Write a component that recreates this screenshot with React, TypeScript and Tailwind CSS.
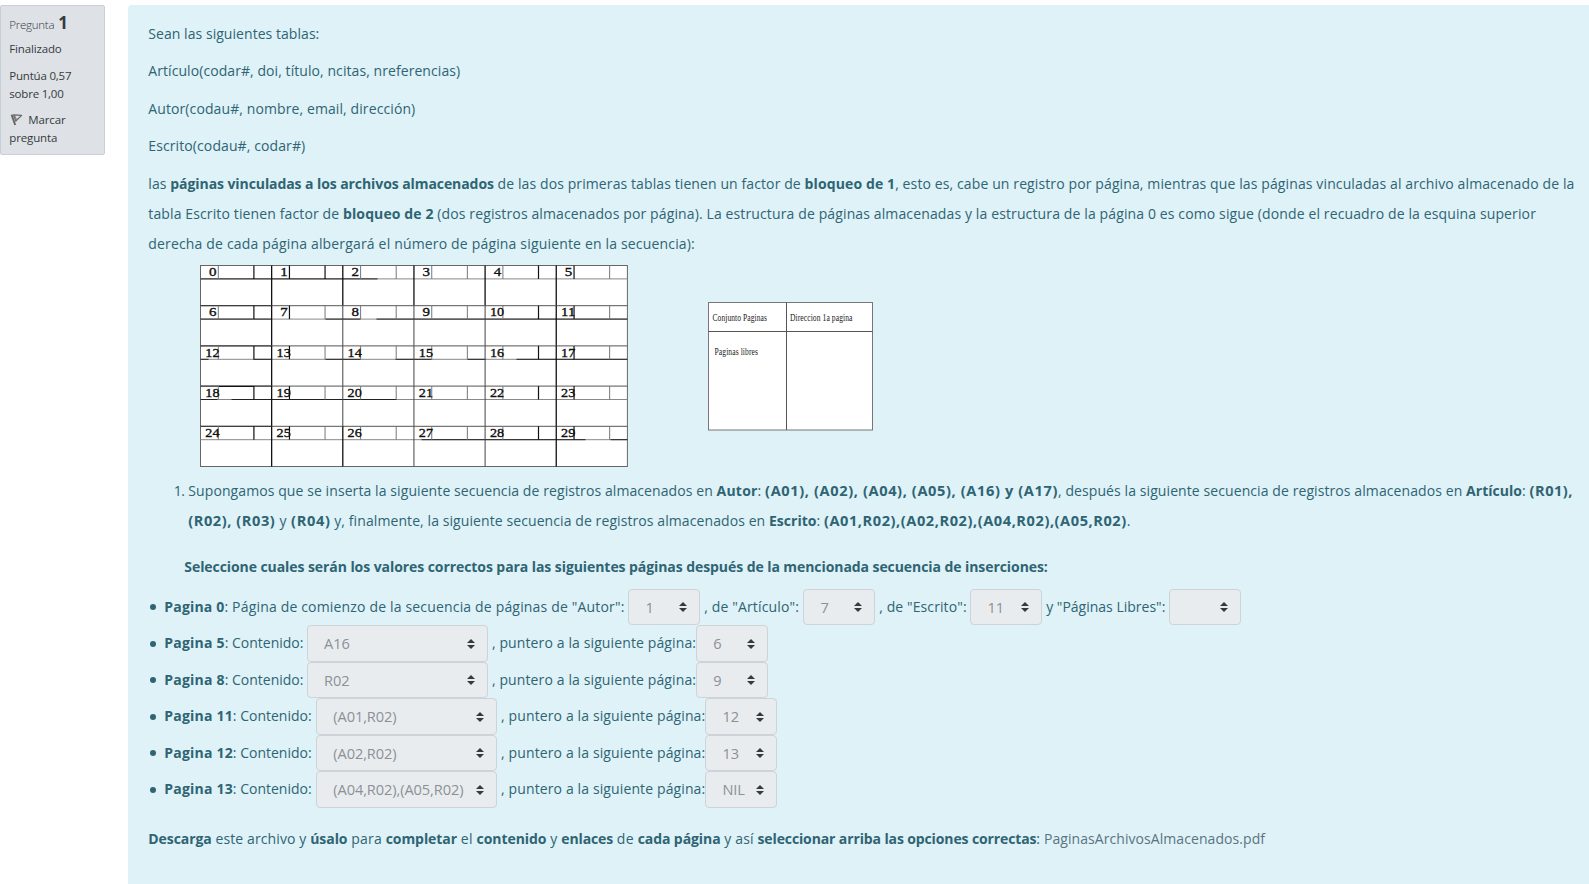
import type { ReactNode } from "react";

const COL = 71.15;
const ROW = 40.2;
const HEAD = 13.4;

function B({ children, className = "tracking-[-0.08px]" }: { children: ReactNode; className?: string }) {
  return <strong className={`font-bold ${className}`}>{children}</strong>;
}

function PageGrid() {
  const rows = [0, 1, 2, 3, 4];
  const cols = [0, 1, 2, 3, 4, 5];
  const dark: [number, number, number][] = [
    [0, 0, 177], [1, 0, 53], [1, 53, 71], [1, 125, 160], [1, 176, 427],
    [2, 0, 8], [2, 53, 71], [2, 125, 160], [2, 195, 231], [2, 267, 285], [2, 316, 427],
    [3, 0, 17], [3, 31, 196], [4, 221, 385], [4, 410, 427],
  ];
  const thickColumn = (k: number, r: number) =>
    k === 1 || k === 5 || (k === 2 && (r === 0 || r === 4)) || (k > 2 && r === 0);
  return (
    <svg width="429" height="203" viewBox="0 0 429 203" className="block">
      <g transform="translate(.5 .5)">
        <rect width={COL * 6} height={ROW * 5} fill="#fff" stroke="#666" />
        {rows.map((r) => (
          <g key={r} transform={`translate(0 ${r * ROW})`}>
            {r > 0 && <path d={`M0 0H${COL * 6}`} stroke="#555" />}
            {r > 0 && <path d={`M0 0H${COL}`} stroke="#333" />}
            {r === 3 && <path d="M17.8 .4H53.4" stroke="#111" />}
            <path d={`M0 ${HEAD}H${COL * 6}`} stroke="#888" />
            {dark.filter((d) => d[0] === r).map(([, a, b]) => (
              <path key={a} d={`M${a} ${HEAD}H${b}`} stroke="#222" />
            ))}
            {cols.map((c) => {
              const n = r * 6 + c;
              const x = c * COL;
              const numThick = c === 1 || c === 5;
              const ptrThick = c === 0 || c === 4 || n === 1;
              return (
                <g key={c}>
                  {c > 0 && (
                    <path
                      d={`M${x} 0V${ROW}`}
                      stroke={thickColumn(c, r) ? "#111" : "#444"}
                      strokeWidth={thickColumn(c, r) ? 1.3 : 1}
                    />
                  )}
                  <path d={`M${x + 17.8} 0V${HEAD}`} stroke={numThick ? "#111" : "#777"} strokeWidth={numThick ? 1.2 : 1} />
                  <path d={`M${x + 53.4} 0V${HEAD}`} stroke={ptrThick ? "#111" : "#777"} strokeWidth={ptrThick ? 1.2 : 1} />
                  <text
                    x={x + (n < 10 ? 8.6 : 4.8)}
                    y="10.6"
                    textLength={n < 10 ? 7.6 : 14.4}
                    lengthAdjust="spacingAndGlyphs"
                    fill="#111"
                    stroke="#111"
                    strokeWidth=".35"
                    className="font-['Liberation_Serif',serif] text-[12.5px]"
                  >
                    {n}
                  </text>
                </g>
              );
            })}
          </g>
        ))}
      </g>
    </svg>
  );
}

function PageZero() {
  return (
    <svg width="165" height="129" viewBox="0 0 165 129" className="block">
      <rect x=".5" y=".5" width="164" height="127.5" fill="#fff" stroke="#777" />
      <path d="M.5 29.5H164.5M78.5 .5V128" stroke="#555" />
      <g fill="#222" className="font-['Liberation_Serif',serif] text-[10.5px]">
        <text x="4.5" y="18.8" textLength="54.5" lengthAdjust="spacingAndGlyphs">Conjunto Paginas</text>
        <text x="82" y="18.8" textLength="62.5" lengthAdjust="spacingAndGlyphs">Direccion 1a pagina</text>
        <text x="6.5" y="53.2" textLength="43.5" lengthAdjust="spacingAndGlyphs">Paginas libres</text>
      </g>
    </svg>
  );
}

function Select({ value, wide = false }: { value: string; wide?: boolean }) {
  return (
    <span
      className={`flex h-[36.5px] shrink-0 items-center justify-between rounded-[4px] border border-[#cdd3d9] bg-[#e9ecef] pr-[12px] pl-[16px] text-[14.6px] tracking-[-0.09px] text-[#8b9196] ${wide ? "w-[180.5px]" : "w-[71.5px]"}`}
    >
      <span>{value}</span>
      <svg width="8" height="10" viewBox="0 0 4 5" fill="#343a40" className="shrink-0">
        <path d="M2 0L0 2h4zm0 5L0 3h4z" />
      </svg>
    </span>
  );
}

function Bullet() {
  return (
    <span className="flex w-4 shrink-0 pl-[1.8px]">
      <span className="size-[6px] rounded-full bg-[#2f6473]" />
    </span>
  );
}

function ContentRow({ page, content, pointer }: { page: string; content: string; pointer: string }) {
  const long = page.length > 1;
  return (
    <li className="flex h-[36.5px] items-center">
      <Bullet />
      <span className={long ? "w-[152px] shrink-0" : "w-[142.8px] shrink-0"}>
        <B className="tracking-[0.2px]">Pagina {page}</B>
        <span className="tracking-[0px]">: Contenido:</span>
      </span>
      <Select value={content} wide />
      <span className="w-[208.6px] shrink-0 pl-[4.3px] tracking-[0.12px]">, puntero a la siguiente página:</span>
      <Select value={pointer} />
    </li>
  );
}

function InfoPanel() {
  return (
    <aside className="h-[150px] w-[105px] shrink-0 rounded-[2px] border border-[#cacfd6] bg-[#dee2e6] pt-[6px] pl-[8.3px] text-[11.5px] leading-[18px] tracking-[-0.15px] text-[#343a40]">
      <h3 className="flex h-[23px] items-baseline gap-[4px] leading-[22px]">
        <span className="font-light tracking-[-0.25px]">Pregunta</span>
        <span className="text-[17px] font-bold">1</span>
      </h3>
      <div className="mt-[5px]">Finalizado</div>
      <div className="mt-[9px] tracking-[-0.2px]">
        Puntúa 0,57
        <br />
        sobre 1,00
      </div>
      <div className="mt-[8px]">
        <svg width="13" height="13" viewBox="0 0 13 13" className="mr-[5px] ml-px inline-block align-[-2px]" fill="none" stroke="#666" strokeLinejoin="round">
          <path d="M1.6 1.6L5.2 12" strokeWidth="1.9" />
          <path d="M3.6 1.8L11.6 2.4L5.8 8Z" strokeWidth="1.2" />
          <path d="M5 3.2L6.6 6.4" strokeWidth=".8" />
        </svg>
        Marcar
        <br />
        pregunta
      </div>
    </aside>
  );
}

export default function App() {
  return (
    <div className="flex h-[884px] w-[1589px] gap-[23px] overflow-hidden bg-white pt-[5px] font-['Open_Sans','Noto_Sans',sans-serif]">
      <InfoPanel />
      <main className="flex-1 rounded-tl-[4px] bg-[#def2f8] pt-[17.5px] pl-[20.3px] text-[14px] leading-[22.5px] tracking-[0.1px] whitespace-nowrap text-[#2f6473]">
        <div className="space-y-[15px]">
          <p className="tracking-[0.05px]">Sean las siguientes tablas:</p>
          <p className="tracking-[0.07px]">Artículo(codar#, doi, título, ncitas, nreferencias)</p>
          <p>Autor(codau#, nombre, email, dirección)</p>
          <p>Escrito(codau#, codar#)</p>
        </div>

        <p className="mt-[11px] leading-[30px]">
          las <B>páginas vinculadas a los archivos almacenados</B> de las dos primeras tablas tienen un factor de{" "}
          <B className="tracking-[0.11px]">bloqueo de 1</B>
          <span className="tracking-[0.115px]">
            , esto es, cabe un registro por página, mientras que las páginas vinculadas al archivo almacenado de la
          </span>
          <br />
          <span className="tracking-[0.125px]">
            tabla Escrito tienen factor de <B className="tracking-[0.11px]">bloqueo de 2</B> (dos registros almacenados por
            página). La estructura de páginas almacenadas y la estructura de la página 0 es como sigue (donde el recuadro de
            la esquina superior
          </span>
          <br />
          <span className="tracking-[0.17px]">
            derecha de cada página albergará el número de página siguiente en la secuencia):
          </span>
        </p>

        <div className="mt-[6px] ml-[51.7px] flex h-[203px] items-center gap-[79px]">
          <PageGrid />
          <PageZero />
        </div>

        <ol className="mt-[8px] leading-[30px]">
          <li className="flex">
            <span className="w-[40px] shrink-0 pl-[25.5px] tracking-[-0.5px]">1.</span>
            <span className="tracking-[0.088px]">
              Supongamos que se inserta la siguiente secuencia de registros almacenados en{" "}
              <B className="tracking-[0.2px]">Autor</B>:{" "}
              <B className="text-[14.6px] leading-none tracking-[0.617px]">(A01), (A02), (A04), (A05), (A16) y (A17)</B>
              , después la siguiente secuencia de registros almacenados en{" "}
              <B className="tracking-[0.04px]">Artículo</B>:{" "}
              <B className="text-[14.6px] leading-none tracking-[0.48px]">(R01),</B>
              <br />
              <B className="text-[14.6px] leading-none tracking-[0.55px]">(R02), (R03)</B>
              <span className="tracking-[0.5px]"> y </span>
              <B className="text-[14.6px] leading-none tracking-[0.65px]">(R04)</B> y, finalmente, la siguiente secuencia
              de registros almacenados en <B className="tracking-normal">Escrito</B>:{" "}
              <B className="text-[14.6px] leading-none tracking-[0.56px]">(A01,R02),(A02,R02),(A04,R02),(A05,R02)</B>.
            </span>
          </li>
        </ol>

        <p className="mt-[20px] pl-[36px]">
          <B className="tracking-[-0.072px]">
            Seleccione cuales serán los valores correctos para las siguientes páginas después de la mencionada secuencia de
            inserciones:
          </B>
        </p>

        <ul className="mt-[10.8px]">
          <li className="flex h-[36.5px] items-center">
            <Bullet />
            <span className="w-[464.1px] shrink-0">
              <B className="tracking-[0.18px]">Pagina 0</B>
              <span className="tracking-[0.17px]">: Página de comienzo de la secuencia de páginas de "Autor":</span>
            </span>
            <Select value="1" />
            <span className="w-[103.5px] shrink-0 pl-[4.3px] tracking-[0.15px]">, de "Artículo":</span>
            <Select value="7" />
            <span className="w-[95.5px] shrink-0 pl-[4.3px]">, de "Escrito":</span>
            <Select value="11" />
            <span className="w-[127.5px] shrink-0 pl-[4.3px] tracking-normal">y "Páginas Libres":</span>
            <Select value="" />
          </li>
          <ContentRow page="5" content="A16" pointer="6" />
          <ContentRow page="8" content="R02" pointer="9" />
          <ContentRow page="11" content="(A01,R02)" pointer="12" />
          <ContentRow page="12" content="(A02,R02)" pointer="13" />
          <ContentRow page="13" content="(A04,R02),(A05,R02)" pointer="NIL" />
        </ul>

        <p className="mt-[20.4px]">
          <B>Descarga</B>
          <span className="tracking-[0.12px]"> este archivo y </span>
          <B>úsalo</B>
          <span className="tracking-[0.2px]"> para </span>
          <B>completar</B>
          <span className="tracking-[0.25px]"> el </span>
          <B>contenido</B>
          <span className="tracking-[0.25px]"> y </span>
          <B className="tracking-[-0.15px]">enlaces</B>
          <span className="tracking-[0.25px]"> de </span>
          <B>cada página</B>
          <span className="tracking-[0.15px]"> y así </span>
          <B className="tracking-[-0.12px]">seleccionar arriba las opciones correctas</B>:{" "}
          <a className="tracking-[0.07px] text-[#5b7480]">PaginasArchivosAlmacenados.pdf</a>
        </p>
      </main>
    </div>
  );
}
